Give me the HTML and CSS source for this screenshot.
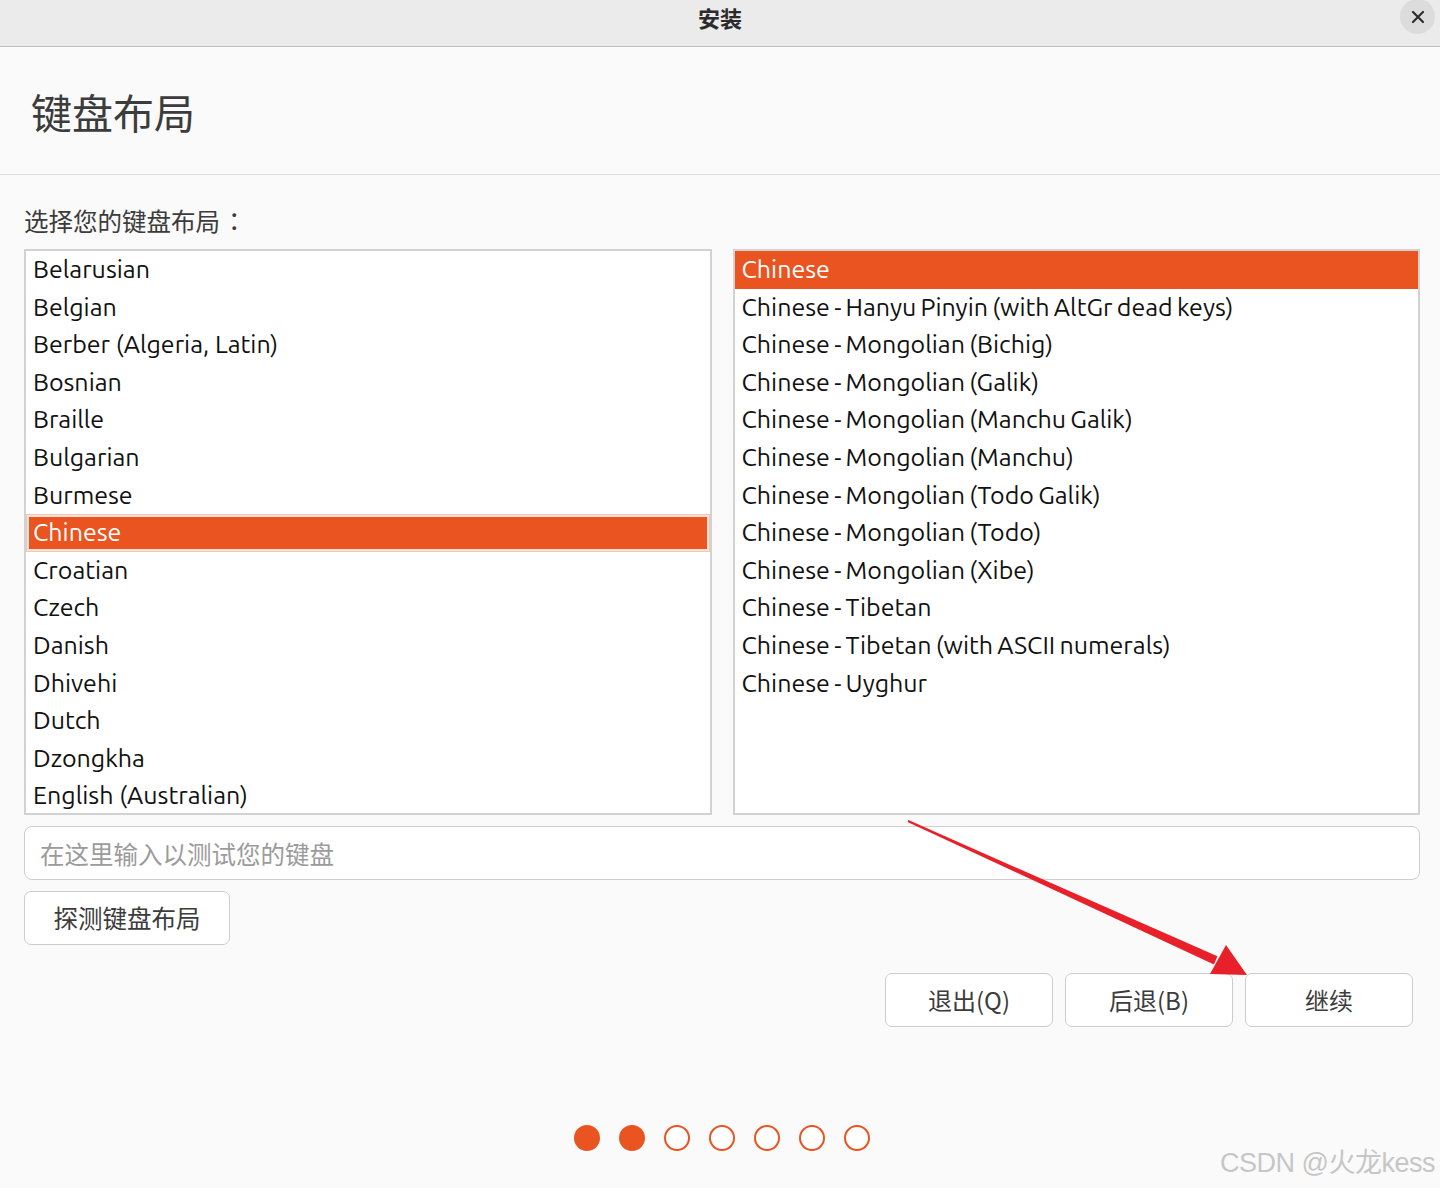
FILE: index.html
```html
<!DOCTYPE html>
<html lang="zh-CN">
<head>
    <meta charset="UTF-8">
    <title>安装</title>
    <link rel="stylesheet" href="styles.css">
</head>
<body>

<div class="window">
    <div class="titlebar">
        <span class="title">安装</span>
        <button class="close-btn" aria-label="关闭">
            <svg width="16" height="16" viewBox="0 0 16 16"><path d="M3 3 L13 13 M13 3 L3 13" stroke="#2e2e2e" stroke-width="2.2" stroke-linecap="round"/></svg>
        </button>
    </div>

    <div class="page-head">
        <h1>键盘布局</h1>
    </div>

    <div class="content">
        <div class="label">选择您的键盘布局<span class="colon">：</span></div>

        <div class="lists">
            <div class="list">
                <div class="row">Belarusian</div>
                <div class="row">Belgian</div>
                <div class="row">Berber (Algeria, Latin)</div>
                <div class="row">Bosnian</div>
                <div class="row">Braille</div>
                <div class="row">Bulgarian</div>
                <div class="row">Burmese</div>
                <div class="row selected focus">Chinese</div>
                <div class="row">Croatian</div>
                <div class="row">Czech</div>
                <div class="row">Danish</div>
                <div class="row">Dhivehi</div>
                <div class="row">Dutch</div>
                <div class="row">Dzongkha</div>
                <div class="row">English (Australian)</div>
                <div class="row">English (Cameroon)</div>
                <div class="row">English (Ghana)</div>
            </div>
            <div class="list variants">
                <div class="row selected">Chinese</div>
                <div class="row">Chinese - Hanyu Pinyin (with AltGr dead keys)</div>
                <div class="row">Chinese - Mongolian (Bichig)</div>
                <div class="row">Chinese - Mongolian (Galik)</div>
                <div class="row">Chinese - Mongolian (Manchu Galik)</div>
                <div class="row">Chinese - Mongolian (Manchu)</div>
                <div class="row">Chinese - Mongolian (Todo Galik)</div>
                <div class="row">Chinese - Mongolian (Todo)</div>
                <div class="row">Chinese - Mongolian (Xibe)</div>
                <div class="row">Chinese - Tibetan</div>
                <div class="row">Chinese - Tibetan (with ASCII numerals)</div>
                <div class="row">Chinese - Uyghur</div>
            </div>
        </div>

        <input class="test-input" type="text" placeholder="在这里输入以测试您的键盘">
        <div class="detect-row"><button class="btn btn-detect">探测键盘布局</button></div>

        <div class="actions">
            <button class="btn">退出(Q)</button>
            <button class="btn">后退(B)</button>
            <button class="btn">继续</button>
        </div>

        <div class="steps">
            <span class="dot on"></span>
            <span class="dot on"></span>
            <span class="dot"></span>
            <span class="dot"></span>
            <span class="dot"></span>
            <span class="dot"></span>
            <span class="dot"></span>
        </div>
    </div>
</div>

<!-- annotation arrow drawn over the screenshot -->
<svg class="arrow" width="1440" height="1188" viewBox="0 0 1440 1188">
    <polygon fill="#e8202a" points="908.4,820.1 1217.4,956.3 1214,964.5 907.6,821.9"/>
    <polygon fill="#e8202a" points="1247,975 1210,974 1226,945"/>
</svg>

<div class="watermark">CSDN @火龙kess</div>

</body>
</html>
```

FILE: styles.css
```css
:root { --orange: #e95420; --text: #3c3c3c; --line: #cdcdcd; }
body { margin: 0; background: #fafafa; font-family: "Ubuntu", "Open Sans", "Noto Sans CJK SC", sans-serif; color: var(--text); }

.window { width: 1440px; height: 1188px; display: flex; flex-direction: column; background: #fafafa; }

/* title bar */
.titlebar { height: 46px; background: #ebebeb; border-bottom: 1px solid #bdbdbd; display: flex; align-items: center; justify-content: center; position: relative; }
.title { font-family: "Noto Sans CJK SC", sans-serif; font-weight: 700; font-size: 22px; color: #2b2b2b; margin-top: -12px; }
.close-btn { position: absolute; right: 5px; top: -1px; width: 35px; height: 35px; border-radius: 50%; border: none; background: #dcdcdc; display: flex; align-items: center; justify-content: center; padding: 0; }

.page-head { height: 127px; border-bottom: 1px solid #dcdcdc; display: flex; align-items: center; padding-left: 31px; }
h1 { margin: 0; font-family: "Noto Sans CJK SC", sans-serif; font-weight: 400; font-size: 41px; color: var(--text); }

.content { padding: 32px 20px 0 24px; display: flex; flex-direction: column; }
.label { font-family: "Noto Sans CJK SC", sans-serif; font-size: 24.5px; line-height: 28px; margin-bottom: 14px; text-spacing-trim: space-all; }
.colon { font-family: "Noto Sans CJK JP", sans-serif; display: inline-block; width: 24px; text-align: center; margin-left: 2px; }

/* layout lists */
.lists { display: flex; gap: 21px; height: 566px; }
.list { flex: 1; background: #fff; border: 2px solid #d2d2d2; overflow: hidden; }
.row { height: 37.6px; line-height: 37.6px; padding-left: 7px; font-size: 25px; color: #111; white-space: nowrap; }
.variants .row { word-spacing: -1.5px; }
.row.selected { background: var(--orange); color: #fff; }
.row.focus { box-shadow: inset 0 0 0 1px #f7c4b2, inset 0 0 0 3px #fbe2d8; }

.test-input { margin-top: 11px; height: 54px; box-sizing: border-box; border: 1px solid var(--line); border-radius: 8px; background: #fff; padding: 0 15px; font-family: "Noto Sans CJK SC", sans-serif; font-size: 24.5px; color: var(--text); outline: none; }
.test-input::placeholder { color: #9b9b9b; }

.btn { height: 54px; box-sizing: border-box; border: 1px solid var(--line); border-radius: 7px; background: #fff; font-family: "Noto Sans CJK SC", sans-serif; font-size: 24.5px; line-height: 36px; color: var(--text); padding: 0; }
.detect-row { margin-top: 11px; display: flex; }
.btn-detect { width: 206px; }

.actions { display: flex; justify-content: flex-end; gap: 12px; margin-top: 28px; padding-right: 7px; }
.actions .btn { width: 168px; font-size: 24px; }

.steps { display: flex; justify-content: center; gap: 19px; margin-top: 98px; }
.dot { width: 26px; height: 26px; box-sizing: border-box; border-radius: 50%; border: 2px solid var(--orange); background: #fff; }
.dot.on { background: var(--orange); }

.arrow { position: absolute; left: 0; top: 0; pointer-events: none; }
.watermark { position: absolute; right: 5px; top: 1141px; font-family: "Liberation Sans", "Noto Sans CJK SC", sans-serif; font-size: 27px; color: #c6c6c6; text-shadow: 0 0 1px #fff; letter-spacing: -0.5px; }
```
